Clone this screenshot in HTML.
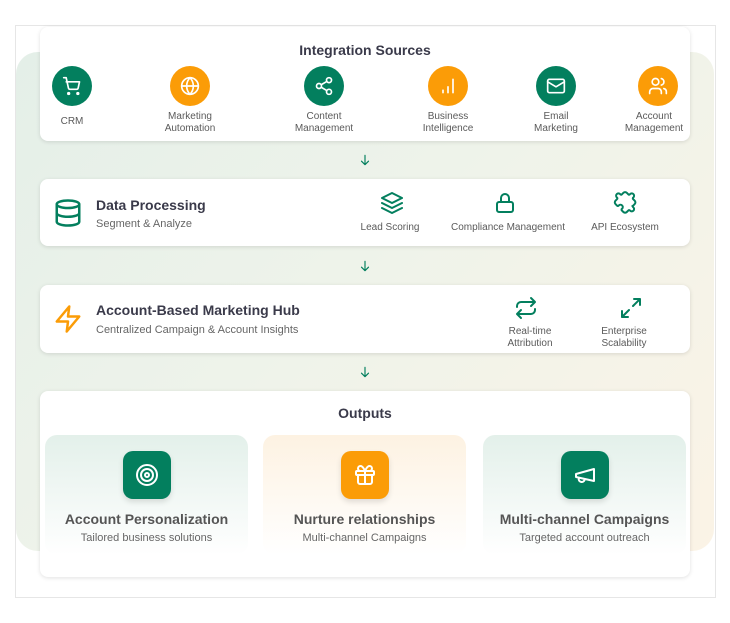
<!DOCTYPE html>
<html><head><meta charset="utf-8"><style>
*{box-sizing:border-box;margin:0;padding:0}
body{width:730px;height:623px;background:#fff;font-family:"Liberation Sans",sans-serif;position:relative;overflow:hidden;color:#555}
.frame{position:absolute;left:15px;top:25px;width:701px;height:573px;border:1px solid #e6e6e6}
.bg{position:absolute;left:16px;top:52px;width:698px;height:499px;border-radius:22px;background:linear-gradient(135deg,#e4efe8 0%,#eef3ea 45%,#fbf3e6 100%)}
.card{position:absolute;left:40px;width:650px;background:#fff;border-radius:8px;box-shadow:0 1px 4px rgba(0,0,0,.12)}
.abs{position:absolute}
.t{position:absolute;text-align:center;font-size:10px;color:#5a5a5a;line-height:12px;transform:translateX(-50%);white-space:nowrap}
.circ{position:absolute;width:40px;height:40px;border-radius:50%;transform:translate(-50%,-50%);display:flex;align-items:center;justify-content:center}
.g{background:#037f5e}.o{background:#fb9c07}
.arrow{position:absolute;left:358px}
h3{position:absolute;font-size:14px;font-weight:bold;color:#3a3a4a}
.sub{position:absolute;font-size:11px;color:#666}
.oc{position:absolute;top:44px;width:203px;height:120px;border-radius:12px}
.sq{position:absolute;left:50%;top:16px;width:48px;height:48px;margin-left:-24px;border-radius:10px;display:flex;align-items:center;justify-content:center;box-shadow:0 3px 6px rgba(0,0,0,.12)}
.ot{position:absolute;top:76px;width:100%;text-align:center;font-size:14px;font-weight:bold;color:#555}
.os{position:absolute;top:97px;width:100%;text-align:center;font-size:11px;color:#666}
svg{fill:none;stroke-linecap:round;stroke-linejoin:round}
</style></head><body>
<div class="frame"></div>
<div class="bg"></div>

<div class="card" style="top:27px;height:114px">
<div class="abs" style="left:0;width:650px;top:15px;text-align:center;font-size:14px;font-weight:bold;color:#3a3a4a">Integration Sources</div>
<div class="circ g" style="left:32px;top:59px"><svg width="20" height="20" viewBox="0 0 24 24" stroke="#fff" stroke-width="2"><circle cx="8" cy="21" r="1"/><circle cx="19" cy="21" r="1"/><path d="M2 2h3l2.7 12.4a2 2 0 0 0 2 1.6h7.7a2 2 0 0 0 2-1.6L21 7H5.1"/></svg></div>
<div class="circ o" style="left:150px;top:59px"><svg width="20" height="20" viewBox="0 0 24 24" stroke="#fff" stroke-width="2"><circle cx="12" cy="12" r="10"/><path d="M12 2a14.5 14.5 0 0 0 0 20 14.5 14.5 0 0 0 0-20M2 12h20"/></svg></div>
<div class="circ g" style="left:284px;top:59px"><svg width="20" height="20" viewBox="0 0 24 24" stroke="#fff" stroke-width="2"><circle cx="18" cy="5" r="3"/><circle cx="6" cy="12" r="3"/><circle cx="18" cy="19" r="3"/><path d="M8.6 13.5l6.8 4M15.4 6.5l-6.8 4"/></svg></div>
<div class="circ o" style="left:408px;top:59px"><svg width="20" height="20" viewBox="0 0 24 24" stroke="#fff" stroke-width="2"><path d="M18 20V4M12 20v-7M6 20v-3"/></svg></div>
<div class="circ g" style="left:516px;top:59px"><svg width="20" height="20" viewBox="0 0 24 24" stroke="#fff" stroke-width="2"><rect x="2" y="4" width="20" height="16" rx="2"/><path d="M22 7l-10 6L2 7"/></svg></div>
<div class="circ o" style="left:618px;top:59px"><svg width="20" height="20" viewBox="0 0 24 24" stroke="#fff" stroke-width="2"><path d="M16 21v-2a4 4 0 0 0-4-4H6a4 4 0 0 0-4 4v2"/><circle cx="9" cy="7" r="4"/><path d="M22 21v-2a4 4 0 0 0-3-3.9M16 3.1a4 4 0 0 1 0 7.8"/></svg></div>
<div class="t" style="left:32px;top:89px">CRM</div>
<div class="t" style="left:150px;top:84px">Marketing<br>Automation</div>
<div class="t" style="left:284px;top:84px">Content<br>Management</div>
<div class="t" style="left:408px;top:84px">Business<br>Intelligence</div>
<div class="t" style="left:516px;top:84px">Email<br>Marketing</div>
<div class="t" style="left:614px;top:84px">Account<br>Management</div>
</div>

<svg class="arrow" style="top:153px" width="14" height="14" viewBox="0 0 24 24" stroke="#037f5e" stroke-width="2"><path d="M12 4v16M6 14l6 6 6-6"/></svg>

<div class="card" style="top:179px;height:67px">
<svg class="abs" style="left:13px;top:18px" width="30" height="32" viewBox="0 0 24 24" stroke="#037f5e" stroke-width="2"><ellipse cx="12" cy="5" rx="9" ry="3"/><path d="M3 5v14a9 3 0 0 0 18 0V5M3 12a9 3 0 0 0 18 0"/></svg>
<h3 style="left:56px;top:18px">Data Processing</h3>
<div class="sub" style="left:56px;top:39px">Segment &amp; Analyze</div>
<svg class="abs" style="left:340px;top:12px" width="24" height="24" viewBox="0 0 24 24" stroke="#037f5e" stroke-width="2"><path d="M12 2L2 7l10 5 10-5-10-5zM2 12l10 5 10-5M2 17l10 5 10-5"/></svg>
<svg class="abs" style="left:453px;top:12px" width="24" height="24" viewBox="0 0 24 24" stroke="#037f5e" stroke-width="2"><rect x="4" y="11" width="16" height="10" rx="2"/><path d="M8 11V7a4 4 0 0 1 8 0v4"/></svg>
<svg class="abs" style="left:573px;top:12px" width="24" height="24" viewBox="0 0 24 24" stroke="#037f5e" stroke-width="2"><path d="M19.4 15a1 1 0 0 0 .7-.3l1.6-1.6a2.4 2.4 0 0 0 0-3.4l-1.6-1.6a.96.96 0 0 1-.3-.7c0-.4.2-.8.6-1a2.3 2.3 0 1 0-3.3-3.3c-.2.4-.6.6-1 .6a1 1 0 0 1-.7-.3l-1.6-1.6a2.4 2.4 0 0 0-3.4 0L8.8 3.4c-.2.2-.4.3-.7.3-.4 0-.8-.2-1-.6A2.3 2.3 0 1 0 3.8 6.4c.4.2.6.6.6 1 0 .3-.1.5-.3.7L2.5 9.7a2.4 2.4 0 0 0 0 3.4l1.6 1.6c.2.2.4.3.7.3.4 0 .8-.2 1-.6a2.3 2.3 0 1 1 3.3 3.3c-.4.2-.6.6-.6 1 0 .3.1.5.3.7l1.6 1.6a2.4 2.4 0 0 0 3.4 0l1.6-1.6c.2-.2.4-.3.7-.3.4 0 .8.2 1 .6a2.3 2.3 0 1 0 3.3-3.3c-.4-.2-.6-.6-.6-1z"/></svg>
<div class="t" style="left:350px;top:43px">Lead Scoring</div>
<div class="t" style="left:468px;top:43px">Compliance Management</div>
<div class="t" style="left:585px;top:43px">API Ecosystem</div>
</div>

<svg class="arrow" style="top:259px" width="14" height="14" viewBox="0 0 24 24" stroke="#037f5e" stroke-width="2"><path d="M12 4v16M6 14l6 6 6-6"/></svg>

<div class="card" style="top:285px;height:68px">
<svg class="abs" style="left:13px;top:18px" width="30" height="32" viewBox="0 0 24 24" stroke="#fb9c07" stroke-width="2"><path d="M13 2L3 14h9l-1 8 10-12h-9l1-8z"/></svg>
<h3 style="left:56px;top:17px">Account-Based Marketing Hub</h3>
<div class="sub" style="left:56px;top:39px">Centralized Campaign &amp; Account Insights</div>
<svg class="abs" style="left:474px;top:11px" width="24" height="24" viewBox="0 0 24 24" stroke="#037f5e" stroke-width="2"><path d="M17 2l4 4-4 4M3 11v-1a4 4 0 0 1 4-4h14M7 22l-4-4 4-4M21 13v1a4 4 0 0 1-4 4H3"/></svg>
<svg class="abs" style="left:579px;top:11px" width="24" height="24" viewBox="0 0 24 24" stroke="#037f5e" stroke-width="2"><path d="M15 3h6v6M9 21H3v-6M21 3l-7 7M3 21l7-7"/></svg>
<div class="t" style="left:490px;top:41px">Real-time<br>Attribution</div>
<div class="t" style="left:584px;top:41px">Enterprise<br>Scalability</div>
</div>

<svg class="arrow" style="top:365px" width="14" height="14" viewBox="0 0 24 24" stroke="#037f5e" stroke-width="2"><path d="M12 4v16M6 14l6 6 6-6"/></svg>

<div class="card" style="top:391px;height:186px">
<div class="abs" style="left:0;width:650px;top:14px;text-align:center;font-size:14px;font-weight:bold;color:#3a3a4a">Outputs</div>
<div class="oc" style="left:5px;background:linear-gradient(#e3f0ea,#fff)">
<div class="sq g"><svg width="24" height="24" viewBox="0 0 24 24" stroke="#fff" stroke-width="2"><circle cx="12" cy="12" r="10"/><circle cx="12" cy="12" r="6"/><circle cx="12" cy="12" r="2"/></svg></div>
<div class="ot">Account Personalization</div><div class="os">Tailored business solutions</div></div>
<div class="oc" style="left:223px;background:linear-gradient(#fdf2e2,#fff)">
<div class="sq o"><svg width="24" height="24" viewBox="0 0 24 24" stroke="#fff" stroke-width="2"><rect x="3" y="8" width="18" height="4" rx="1"/><path d="M12 8v13M19 12v7a2 2 0 0 1-2 2H7a2 2 0 0 1-2-2v-7M7.5 8a2.5 2.5 0 0 1 0-5C10 3 12 8 12 8s2-5 4.5-5a2.5 2.5 0 0 1 0 5"/></svg></div>
<div class="ot">Nurture relationships</div><div class="os">Multi-channel Campaigns</div></div>
<div class="oc" style="left:443px;background:linear-gradient(#e3f0ea,#fff)">
<div class="sq g"><svg width="24" height="24" viewBox="0 0 24 24" stroke="#fff" stroke-width="2"><path d="M3 11l18-5v12L3 14v-3zM11.6 16.8a3 3 0 1 1-5.8-1.6"/></svg></div>
<div class="ot">Multi-channel Campaigns</div><div class="os">Targeted account outreach</div></div>
</div>
</body></html>
